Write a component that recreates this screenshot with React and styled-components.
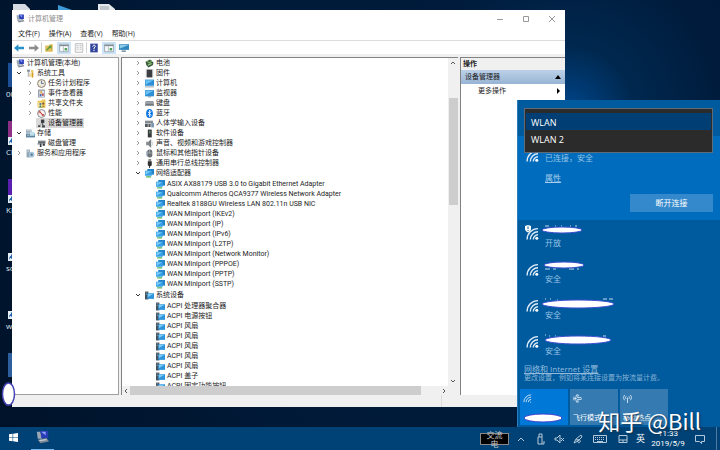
import React from "react";
import styled, { createGlobalStyle } from "styled-components";

const systemTools = [
  { icon: "clock", label: "任务计划程序", closed: true },
  { icon: "event", label: "事件查看器", closed: true },
  { icon: "share", label: "共享文件夹", closed: true },
  { icon: "perf", label: "性能", closed: true },
  { icon: "device", label: "设备管理器", selected: true },
];

const deviceClasses = [
  { icon: "battery", label: "电池" },
  { icon: "firmware", label: "固件" },
  { icon: "computer", label: "计算机" },
  { icon: "monitor", label: "监视器" },
  { icon: "keyboard", label: "键盘" },
  { icon: "bluetooth", label: "蓝牙" },
  { icon: "hid", label: "人体学输入设备" },
  { icon: "software", label: "软件设备" },
  { icon: "sound", label: "声音、视频和游戏控制器" },
  { icon: "mouse", label: "鼠标和其他指针设备" },
  { icon: "usb", label: "通用串行总线控制器" },
];

const adapters = [
  "ASIX AX88179 USB 3.0 to Gigabit Ethernet Adapter",
  "Qualcomm Atheros QCA9377 Wireless Network Adapter",
  "Realtek 8188GU Wireless LAN 802.11n USB NIC",
  "WAN Miniport (IKEv2)",
  "WAN Miniport (IP)",
  "WAN Miniport (IPv6)",
  "WAN Miniport (L2TP)",
  "WAN Miniport (Network Monitor)",
  "WAN Miniport (PPPOE)",
  "WAN Miniport (PPTP)",
  "WAN Miniport (SSTP)",
];

const systemDevices = [
  "ACPI 处理器聚合器",
  "ACPI 电源按钮",
  "ACPI 风扇",
  "ACPI 风扇",
  "ACPI 风扇",
  "ACPI 风扇",
  "ACPI 风扇",
  "ACPI 盖子",
  "ACPI 固定功能按钮",
];

const shortcuts = [
  { label: "", color: "transparent" },
  { label: "00", color: "#1c4f96" },
  { label: "Ch", color: "#8e2f86", arrow: true },
  { label: "KN", color: "#5a1fae", arrow: true },
  { label: "so", color: "transparent", arrow: true },
  { label: "we", color: "transparent", arrow: true },
  { label: "", color: "#2c5f9c" },
];

// rx, ry and cy of the mark over every network name, with the letter tips round it
const networks = [
  { secure: "开放", open: true, cx: 21, cy: 6, rx: 20, ry: 3, tips: "M4 2h4M14 2h1M20 2h1M29 2h1M34 2h2" },
  { secure: "安全", cx: 23, cy: 5, rx: 20, ry: 3, tips: "M4 9h5M12 9h3M28 9h5M36 9h2" },
  { secure: "安全", cx: 37, cy: 8, rx: 36, ry: 4, tips: "M4 3h1M9 3h1M16 4h1M62 3h4M68 3h4" },
  { secure: "安全", cx: 37, cy: 8, rx: 33, ry: 4, tips: "M4 3h1M8 4h1M14 4h1M62 4h3" },
];

const Glyph = ({ kind }) => {
  switch (kind) {
    case "app":
      return (
        <g>
          <path d="M1 2h4l2 8H2z" fill="#9aa7b4" />
          <path d="M5 1h9v8H6z" fill="#2a3db4" />
          <path d="M6 2l5 4V2z" fill="#8fa4ff" />
          <path d="M2 11l10-2 3 4-10 2z" fill="#7c8896" />
          <path d="M4 12l8-1" stroke="#e3e8ee" />
        </g>
      );
    case "tools":
      return (
        <g>
          <path d="M3 2h3v12H3z" fill="#b9bec4" />
          <path d="M2 1h5v4H2z" fill="#8b949d" />
          <path d="M9 2h4v4H9z" fill="#e9c65a" />
          <path d="M10 6h3v9h-3z" fill="#d49a22" />
          <path d="M6 8h4v6H6z" fill="#f1d98b" />
        </g>
      );
    case "clock":
      return (
        <g>
          <circle cx="8" cy="8" r="7" fill="#efe9da" stroke="#77705f" strokeWidth="1.5" />
          <path d="M8 3v5h4" fill="none" stroke="#3c5e93" strokeWidth="1.4" />
        </g>
      );
    case "event":
      return (
        <g>
          <path d="M2 1h12v14H2z" fill="#8b8f99" />
          <path d="M4 3h9v11H4z" fill="#dfe6f2" />
          <path d="M6 4h3v4H6z" fill="#e0a02c" />
          <path d="M9 8h3v4H9z" fill="#b34343" />
          <path d="M5 9h3v4H5z" fill="#4767ae" />
        </g>
      );
    case "share":
      return (
        <g>
          <path d="M1 3h7l1-2h6v14H1z" fill="#e9c556" />
          <path d="M2 6h8v8H2z" fill="#f5df90" />
          <circle cx="6" cy="9" r="2" fill="#4e7ca4" />
          <path d="M3 15l3-4 3 4z" fill="#3c8b66" />
          <circle cx="11" cy="8" r="2" fill="#7c5b3c" />
          <path d="M8 15l3-5 3 5z" fill="#c09534" />
        </g>
      );
    case "perf":
      return (
        <g>
          <circle cx="8" cy="8" r="7" fill="#f6f1f1" stroke="#75797d" strokeWidth="1.5" />
          <path d="M3 8l2-4 5 8 2-3M4 4l8 8" fill="none" stroke="#c93434" strokeWidth="1.5" />
        </g>
      );
    case "device":
      return (
        <g>
          <path d="M7 1h6v6H7z" fill="#353b42" />
          <path d="M9 7h2v4H9z" fill="#555" />
          <path d="M2 11h4v3H2zM9 11h5v4H9z" fill="#3d4248" />
          <path d="M5 9h6" stroke="#777" />
        </g>
      );
    case "storage":
      return (
        <g>
          <path d="M0 1h10v6H0z" fill="#9fb1bf" />
          <path d="M2 3h7" stroke="#eef3f6" />
          <path d="M0 8h16v7H0z" fill="#5f87a0" />
          <path d="M7 5h8v7H7z" fill="#bfe0ec" />
          <path d="M2 11h4" stroke="#fff" />
        </g>
      );
    case "disk":
      return (
        <g>
          <path d="M2 3h13v5H2z" fill="#5d666c" />
          <path d="M3 4h11" stroke="#b4bdc3" />
          <path d="M5 8h3v6H5zM10 8h4v4h-4z" fill="#343b40" />
          <path d="M1 7h4v3H1z" fill="#868f95" />
        </g>
      );
    case "services":
      return (
        <g>
          <path d="M1 1h6v14H1z" fill="#8ea5b4" />
          <path d="M2 3h4M2 5h4" stroke="#e9f0f5" />
          <circle cx="10" cy="10" r="5" fill="#a8c4d8" />
          <circle cx="10" cy="10" r="2" fill="#4f7896" />
        </g>
      );
    case "battery":
      return (
        <g>
          <path d="M1 5l8-4 6 5-1 5-8 4-4-5z" fill="#3b5a44" />
          <path d="M3 4l5 3 4-4" fill="none" stroke="#79b15c" strokeWidth="2" />
          <path d="M5 11l7-3" stroke="#9fd08b" strokeWidth="2" />
        </g>
      );
    case "firmware":
      return (
        <g>
          <path d="M3 1h10v14H3z" fill="#3c3d40" />
          <path d="M2 1v14M14 1v14" stroke="#77797d" strokeDasharray="1 1" />
        </g>
      );
    case "computer":
      return (
        <g>
          <path d="M0 1h16v11H0z" fill="#2d8fd6" />
          <path d="M1 2h14L1 10z" fill="#6bc0f2" />
          <path d="M0 14h16" stroke="#8e9aa3" strokeWidth="1.6" />
        </g>
      );
    case "monitor":
      return (
        <g>
          <path d="M0 2h16v11H0z" fill="#2d8fd6" />
          <path d="M1 3h14L1 11z" fill="#6bc0f2" />
          <path d="M5 14h6" stroke="#77838c" strokeWidth="1.4" />
        </g>
      );
    case "keyboard":
      return (
        <g>
          <path d="M1 4h14l1 8H0z" fill="#6f767c" />
          <path d="M1 7h14" stroke="#b7bdc2" strokeWidth="2" />
        </g>
      );
    case "bluetooth":
      return (
        <g>
          <ellipse cx="8" cy="8" rx="6" ry="8" fill="#0a74e0" />
          <path d="M5 5l6 6-3 3V2l3 3-6 6" fill="none" stroke="#fff" strokeWidth="1.4" />
        </g>
      );
    case "hid":
      return (
        <g>
          <path d="M0 3h14v5H0z" fill="#7b8288" />
          <path d="M1 5h11" stroke="#c8cdd1" strokeDasharray="1 1" />
          <path d="M0 9h5v5H0zM6 9h4v5H6z" fill="#50575d" />
          <path d="M11 7h5v8h-5z" fill="#7d99af" />
        </g>
      );
    case "software":
      return (
        <g>
          <path d="M5 1h7v14H5z" fill="#36393c" />
          <path d="M7 3h3v5H7z" fill="#5d7a63" />
        </g>
      );
    case "sound":
      return (
        <g>
          <path d="M2 5h4l5-5v16l-5-5H2z" fill="#878c91" />
          <path d="M9 3v10" stroke="#4d5257" />
          <path d="M12 4c2 2 2 6 0 8" fill="none" stroke="#a7adb2" />
        </g>
      );
    case "mouse":
      return (
        <g>
          <rect x="4" y="1" width="9" height="14" rx="4" fill="#6c7177" />
          <path d="M8 1v6M4 7h9" stroke="#c0c5ca" />
          <path d="M4 3c-2 3-2 7 0 10" fill="none" stroke="#5079ad" />
        </g>
      );
    case "usb":
      return (
        <g>
          <path d="M6 0h5v4H6z" fill="#8a8a8a" />
          <path d="M5 4h7v7l-2 2H7l-2-2z" fill="#2e2e2e" />
          <path d="M8 12v4" stroke="#2e2e2e" strokeWidth="1.6" />
        </g>
      );
    case "network":
      return (
        <g>
          <path d="M4 0h12v10H4z" fill="#2583c8" />
          <path d="M0 3h12v9H0z" fill="#36a0e6" />
          <path d="M1 4h10l-10 6z" fill="#7ccaf5" />
          <path d="M2 14h9" stroke="#39a845" strokeWidth="2" />
        </g>
      );
    case "chip":
      return (
        <g>
          <path d="M0 1h6v14H0z" fill="#43525c" />
          <path d="M1 3h3M1 6h3" stroke="#9bb1bd" />
          <path d="M4 4h12v10H4z" fill="#2d93da" />
          <path d="M5 5h10l-10 6z" fill="#7ccaf5" />
        </g>
      );
    case "back":
      return <path d="M0 8l7-6v4h9v4H7v4z" fill="#2a90cc" />;
    case "forward":
      return <path d="M16 8l-7-6v4H0v4h9v4z" fill="#8a8c8e" />;
    case "folderUp":
      return (
        <g>
          <path d="M2 4h6l1-2h5v12H2z" fill="#e0bd59" />
          <path d="M3 11l6-6-3 0 6-1v6l-2-3-5 5z" fill="#4e9a3d" />
        </g>
      );
    case "panes":
      return (
        <g>
          <path d="M1 2h14v12H1z" fill="#f7fafc" stroke="#7e8990" />
          <path d="M1 4h14" stroke="#7e8990" strokeWidth="2" />
          <path d="M7 5v9" stroke="#9ba5ab" />
          <path d="M9 8h4v4H9z" fill="#4fa45a" />
        </g>
      );
    case "props":
      return (
        <g>
          <path d="M2 1h12v14H2z" fill="#f5f5f5" stroke="#a0a4a8" />
          <path d="M4 4h3M4 7h3M4 10h3M9 4h3M9 7h3M9 10h3" stroke="#a8afb5" />
        </g>
      );
    case "help":
      return (
        <g>
          <path d="M2 1h12v14H2z" fill="#31459b" />
          <path d="M6 6c0-4 5-3 4 0l-2 2v2M8 11v2" fill="none" stroke="#fff" strokeWidth="1.6" />
        </g>
      );
    case "scan":
      return (
        <g>
          <path d="M0 2h16v9H0z" fill="#2f86bd" />
          <path d="M1 3h14L1 9z" fill="#8acbe8" />
          <path d="M4 13h7" stroke="#5b7a8c" strokeWidth="2" />
        </g>
      );
    default:
      return null;
  }
};

const Icon = ({ kind }) => (
  <IconSvg viewBox="0 0 16 16" aria-hidden="true">
    <Glyph kind={kind} />
  </IconSvg>
);

const Chevron = ({ open }) => (
  <ChevronSvg viewBox="0 0 6 6" aria-hidden="true">
    <path
      d={open ? "M1 2l2 2 2-2" : "M2 1l2 2-2 2"}
      fill="none"
      stroke={open ? "#333" : "#999"}
    />
  </ChevronSvg>
);

const TreeRow = ({ icon, label, level = 0, open, closed, selected }) => (
  <Row $level={level}>
    <Toggle>{(open || closed) && <Chevron open={open} />}</Toggle>
    <RowLabel $selected={selected}>
      <Icon kind={icon} />
      {label}
    </RowLabel>
  </Row>
);

const WifiIcon = ({ shield }) => (
  <WifiSvg viewBox="0 0 14 16" aria-hidden="true">
    <g fill="none" stroke="#dcebf7" strokeWidth="1.4">
      <path d="M2.100 14.500A10.900 10.900 0 0 1 13 3.600" />
      <path d="M5.300 14.500A7.700 7.700 0 0 1 13 6.800" />
      <path d="M8.300 14.500A4.700 4.700 0 0 1 13 9.800" />
    </g>
    <circle cx="11.800" cy="13.300" r="1.500" fill="#fff" />
    {shield && (
      <g>
        <path d="M0 1l3-1 3 1v3c0 2-2 3-3 3.500C2 7 0 6 0 4z" fill="#fff" />
        <path d="M3 1.500v2.500M3 5v1" stroke="#005a9e" />
      </g>
    )}
  </WifiSvg>
);

const App = () => {
  return (
    <Desktop>
      <GlobalStyle />
      <Wallpaper>
        {/* Desktop shortcuts */}
        <TopIcons viewBox="0 0 130 14" aria-hidden="true">
          <path d="M13 4h12l5 5v5H13z" fill="#d5dbe0" />
          <path d="M58 5l14 5v3H58z" fill="#3b9bd6" />
          <path d="M98 4h11l6 5v5H98z" fill="#e5e8ea" />
          <path d="M100 7h9M100 9h9" stroke="#9ba5ad" />
        </TopIcons>
        <Shortcuts>
          {shortcuts.map((s, i) => (
            <Shortcut key={i}>
              <ShortcutIcon $color={s.color}>
                {s.arrow && (
                  <ArrowSvg viewBox="0 0 8 8" aria-hidden="true">
                    <path d="M0 0h8v8H0z" fill="#e6eef6" />
                    <path d="M1 7c0-3 1-4 2-4V1l3 3-3 2V5C2 5 2 5 1 7z" fill="#1f5ea8" />
                  </ArrowSvg>
                )}
              </ShortcutIcon>
              <ShortcutLabel>{s.label}</ShortcutLabel>
            </Shortcut>
          ))}
        </Shortcuts>

        {/* Computer management window */}
        <Window>
          <TitleBar>
            <Icon kind="app" />
            <Title>计算机管理</Title>
            <CaptionButton aria-label="最小化">
              <CaptionSvg viewBox="0 0 6 6"><path d="M0 3.500h6" /></CaptionSvg>
            </CaptionButton>
            <CaptionButton aria-label="最大化">
              <CaptionSvg viewBox="0 0 6 6"><path d="M.5.5h5v5h-5z" /></CaptionSvg>
            </CaptionButton>
            <CaptionButton aria-label="关闭">
              <CaptionSvg viewBox="0 0 6 6"><path d="M0 0l6 6M6 0L0 6" /></CaptionSvg>
            </CaptionButton>
          </TitleBar>
          <MenuBar>
            <MenuButton>文件(F)</MenuButton>
            <MenuButton>操作(A)</MenuButton>
            <MenuButton>查看(V)</MenuButton>
            <MenuButton>帮助(H)</MenuButton>
          </MenuBar>
          <ToolBar>
            <ToolButton aria-label="后退"><Icon kind="back" /></ToolButton>
            <ToolButton aria-label="前进"><Icon kind="forward" /></ToolButton>
            <Divider />
            <ToolButton aria-label="上一级"><Icon kind="folderUp" /></ToolButton>
            <ToolButton aria-label="控制台树" $active><Icon kind="panes" /></ToolButton>
            <ToolButton aria-label="属性"><Icon kind="props" /></ToolButton>
            <Divider />
            <ToolButton aria-label="帮助"><Icon kind="help" /></ToolButton>
            <ToolButton aria-label="操作窗格" $active><Icon kind="panes" /></ToolButton>
            <ToolButton aria-label="扫描"><Icon kind="scan" /></ToolButton>
          </ToolBar>

          <Panes>
            <ConsoleTree>
              <RootRow>
                <Icon kind="app" />
                计算机管理(本地)
              </RootRow>
              <TreeRow icon="tools" label="系统工具" open />
              {systemTools.map((t) => (
                <TreeRow key={t.label} level={1} {...t} />
              ))}
              <TreeRow icon="storage" label="存储" open />
              <TreeRow icon="disk" label="磁盘管理" level={1} />
              <TreeRow icon="services" label="服务和应用程序" closed />
            </ConsoleTree>

            <DevicePane>
              <DeviceTree>
                {deviceClasses.map((d) => (
                  <TreeRow key={d.label} closed {...d} />
                ))}
                <TreeRow icon="network" label="网络适配器" open />
                <Branch>
                  {adapters.map((name) => (
                    <TreeRow key={name} icon="network" label={name} level={1} />
                  ))}
                </Branch>
                <TreeRow icon="chip" label="系统设备" open />
                <Branch>
                  {systemDevices.map((name, i) => (
                    <TreeRow key={i} icon="chip" label={name} level={1} />
                  ))}
                </Branch>
              </DeviceTree>
              <VerticalBar>
                <ScrollSvg viewBox="0 0 8 8"><path d="M2 5l2-2 2 2" /></ScrollSvg>
                <VerticalTrack><VerticalThumb /></VerticalTrack>
                <ScrollSvg viewBox="0 0 8 8"><path d="M2 3l2 2 2-2" /></ScrollSvg>
              </VerticalBar>
              <HorizontalBar>
                <ScrollSvg viewBox="0 0 8 8"><path d="M5 2L3 4l2 2" /></ScrollSvg>
                <HorizontalTrack><HorizontalThumb /></HorizontalTrack>
                <ScrollSvg viewBox="0 0 8 8"><path d="M3 2l2 2-2 2" /></ScrollSvg>
              </HorizontalBar>
            </DevicePane>

            <ActionPane>
              <ActionHeading>操作</ActionHeading>
              <ActionGroup>
                设备管理器
                <MarkSvg viewBox="0 0 6 6"><path d="M0 5l3-4 3 4z" /></MarkSvg>
              </ActionGroup>
              <ActionItem>
                更多操作
                <MarkSvg viewBox="0 0 6 6"><path d="M2 0l3 3-3 3z" /></MarkSvg>
              </ActionItem>
            </ActionPane>
          </Panes>
          <StatusBar>
            <StatusPart />
          </StatusBar>
        </Window>
        <Smudge viewBox="0 0 14 24" aria-hidden="true">
          <ellipse cx="7" cy="12" rx="6" ry="11" fill="#fff" stroke="#4444b8" strokeWidth="1.500" />
        </Smudge>
      </Wallpaper>

      {/* Network flyout */}
      <Flyout>
        <FlyoutTop>
          <AdapterSelect size={2} defaultValue="WLAN" aria-label="WLAN">
            <option value="WLAN">WLAN</option>
            <option value="WLAN 2">WLAN 2</option>
          </AdapterSelect>
        </FlyoutTop>
        <Connected>
          <ConnectedInfo>
            <WifiIcon />
            <NetworkText>
              <Status>已连接，安全</Status>
              <PropertiesLink href="#properties">属性</PropertiesLink>
            </NetworkText>
          </ConnectedInfo>
          <DisconnectButton>断开连接</DisconnectButton>
        </Connected>
        <NetworkList>
          {networks.map((n, i) => (
            <Network key={i}>
              <WifiIcon shield={n.open} />
              <NetworkText>
                <NameMark viewBox="0 0 80 13" aria-hidden="true">
                  <path d={n.tips} stroke="#c4dcef" />
                  <ellipse cx={n.cx} cy={n.cy} rx={n.rx} ry={n.ry} fill="#fff" stroke="#3f4fcf" />
                </NameMark>
                <Status>{n.secure}</Status>
              </NetworkText>
            </Network>
          ))}
        </NetworkList>
        <SettingsLink href="#settings">网络和 Internet 设置</SettingsLink>
        <Hint>更改设置，例如将某连接设置为按流量计费。</Hint>
        <Tiles>
          <Tile $on aria-label="WLAN">
            <TileSvg viewBox="0 0 10 10">
              <path d="M1 9a8 8 0 0 1 8-8M3.500 9A5.500 5.500 0 0 1 9 3.500M6 9a3 3 0 0 1 3-3M8 9h1" />
            </TileSvg>
            <TileMark viewBox="0 0 40 10">
              <ellipse cx="20" cy="5" rx="19" ry="4" fill="#fff" stroke="#3f3fcf" />
            </TileMark>
          </Tile>
          <Tile>
            <TileSvg viewBox="0 0 10 10">
              <path d="M1 3v4M1 5h3M4 1h2l-1 3h4l1 1-1 1H5l1 3H4L3 6V4z" />
            </TileSvg>
            飞行模式
          </Tile>
          <Tile>
            <TileSvg viewBox="0 0 10 10">
              <path d="M2 1a4 4 0 0 0 0 6M8 1a4 4 0 0 1 0 6M3.500 2.500a2 2 0 0 0 0 3M6.500 2.500a2 2 0 0 1 0 3M5 4v6" />
            </TileSvg>
            移动热点
          </Tile>
        </Tiles>
      </Flyout>

      <TaskBar>
        <StartButton aria-label="开始">
          <StartSvg viewBox="0 0 10 10">
            <path d="M0 1.500l4-.6v3.800H0zM4.600.8L10 0v4.700H4.600zM0 5.300h4v3.800l-4-.6zM4.600 5.300H10V10l-5.400-.8z" />
          </StartSvg>
        </StartButton>
        <RunningApp aria-label="计算机管理">
          <Icon kind="app" />
        </RunningApp>
        <Tray>
          <PowerBox>交流电</PowerBox>
          <TrayButton aria-label="显示隐藏的图标">
            <TraySvg viewBox="0 0 12 12"><path d="M3 8l3-3 3 3" /></TraySvg>
          </TrayButton>
          <TrayButton aria-label="USB">
            <TraySvg viewBox="0 0 12 12"><path d="M4 4h4v7H4zM5 4V1h3v3M8 11h2V8" /></TraySvg>
          </TrayButton>
          <TrayButton aria-label="音量">
            <TraySvg viewBox="0 0 12 12"><path d="M2 5h2l3-3v8L4 7H2zM8 5l3 3M11 5L8 8" /></TraySvg>
          </TrayButton>
          <TrayButton aria-label="Ink">
            <TraySvg viewBox="0 0 12 12"><path d="M2 10l2-4 5-4 1 2-4 4zM4 7c3-1 5 0 4 2s-3 0-2-2" /></TraySvg>
          </TrayButton>
          <TrayButton aria-label="触摸键盘" $wide>
            <KeyboardSvg viewBox="0 0 14 12">
              <path d="M.5 2.500h13v7H.5z" />
              <path d="M2 4.500h10M2 6.500h10" strokeDasharray="1 1" />
              <path d="M4 8.500h6" />
            </KeyboardSvg>
          </TrayButton>
          <TrayButton aria-label="触摸板">
            <TraySvg viewBox="0 0 12 12"><path d="M2 2.500h8v7H2zM2 7h8M6 7v2" /></TraySvg>
          </TrayButton>
          <Language>英</Language>
          <Clock>
            <span>11:33</span>
            <span>2019/5/9</span>
          </Clock>
          <TrayButton aria-label="通知" $wide>
            <TraySvg viewBox="0 0 12 12"><path d="M1.500 2.500h9v6h-3v2l-2-2h-4z" /></TraySvg>
          </TrayButton>
          <ShowDesktop aria-label="显示桌面" />
        </Tray>
      </TaskBar>
      <Watermark>知乎 @Bill</Watermark>
    </Desktop>
  );
};

export default App;

// Styles
const GlobalStyle = createGlobalStyle`
  * {
    box-sizing: border-box;
  }

  body {
    margin: 0;
    overflow: hidden;
    font-family: "Open Sans", "Noto Sans CJK SC", sans-serif;
    font-size: 7px;
    line-height: 10px;
  }

  button, select {
    font: inherit;
    color: inherit;
    border: none;
    border-radius: 0;
    padding: 0;
    background: none;
  }

  ul {
    list-style: none;
    margin: 0;
    padding: 0;
  }
`;

const Desktop = styled.div`
  position: relative;
  display: flex;
  flex-direction: column;
  height: 100vh;
`;

const Wallpaper = styled.main`
  position: relative;
  flex: 1;
  min-height: 0;
  overflow: hidden;
  background: radial-gradient(circle at 79% 26%, #00458a 0, #00284f 10%, #001b3b 24%, #001a38 60%, #001229 100%);
`;

const TopIcons = styled.svg`
  position: absolute;
  top: 0;
  left: 0;
  width: 130px;
  height: 14px;
`;

const Shortcuts = styled.div`
  display: flex;
  flex-direction: column;
  margin-top: -17px;
`;

const Shortcut = styled.div`
  display: flex;
  flex-direction: column;
  justify-content: flex-end;
  height: 58px;
  padding-left: 6px;
`;

const ShortcutIcon = styled.div`
  display: flex;
  align-items: flex-end;
  width: 20px;
  height: 24px;
  margin-left: 2px;
  background: ${(p) => p.$color};
`;

const ArrowSvg = styled.svg`
  width: 8px;
  height: 8px;
`;

const ShortcutLabel = styled.span`
  height: 12px;
  padding-top: 2px;
  font-size: 8px;
  color: #dbe4ee;
`;

const Window = styled.section`
  position: absolute;
  inset: 10px 155px 20px 12px;
  display: flex;
  flex-direction: column;
  background: #f0f0f0;
  color: #1c1c1c;
`;

const IconSvg = styled.svg`
  width: 9px;
  height: 9px;
  flex: none;
`;

const TitleBar = styled.header`
  display: flex;
  align-items: center;
  height: 17px;
  padding-left: 4px;
  background: #fff;
`;

const Title = styled.h1`
  flex: 1;
  margin: 0 0 0 3px;
  font-size: 7px;
  font-weight: normal;
  color: #8c8c8c;
`;

const CaptionButton = styled.button`
  display: flex;
  align-items: center;
  justify-content: center;
  width: 26px;
  height: 17px;
`;

const CaptionSvg = styled.svg`
  width: 6px;
  height: 6px;
  fill: none;
  stroke: #999;
`;

const MenuBar = styled.nav`
  display: flex;
  align-items: center;
  gap: 9px;
  height: 13px;
  padding-left: 6px;
  background: #fff;
`;

const MenuButton = styled.button``;

const ToolBar = styled.div`
  display: flex;
  align-items: center;
  height: 14px;
  background: #fff;
  border-top: 1px solid #dcdcdc;
`;

const ToolButton = styled.button`
  display: flex;
  align-items: center;
  justify-content: center;
  width: 14px;
  height: 12px;
  background: ${(p) => (p.$active ? "#cce4f7" : "none")};

  & + & {
    margin-left: 1px;
  }

  ${IconSvg} {
    width: 10px;
    height: 10px;
  }
`;

const Divider = styled.span`
  width: 1px;
  height: 11px;
  background: #d0d0d0;
`;

const Panes = styled.div`
  display: grid;
  grid-template-columns: 107px 1fr 105px;
  gap: 2px;
  flex: 1;
  min-height: 0;
  padding-top: 3px;
`;

const ConsoleTree = styled.ul`
  padding-left: 4px;
  background: #fff;
  border: 1px solid #a0a0a0;
  border-left: none;
`;

const Row = styled.li`
  display: flex;
  align-items: center;
  height: 10px;
  padding-left: ${(p) => p.$level * 11}px;
  white-space: nowrap;
`;

const RootRow = styled.li`
  display: flex;
  align-items: center;
  gap: 2px;
  height: 10px;
  white-space: nowrap;
`;

const Toggle = styled.span`
  display: flex;
  width: 9px;
`;

const RowLabel = styled.span`
  display: flex;
  align-items: center;
  gap: 2px;
  padding: 0 1px;
  background: ${(p) => (p.$selected ? "#d9d9d9" : "none")};
`;

const ChevronSvg = styled.svg`
  width: 6px;
  height: 6px;
`;

const DevicePane = styled.div`
  display: grid;
  grid-template-columns: 1fr 10px;
  grid-template-rows: 1fr 9px;
  min-width: 0;
  min-height: 0;
  background: #f0f0f0;
  border-top: 1px solid #828282;
  border-left: 1px solid #828282;
`;

const DeviceTree = styled.ul`
  min-height: 0;
  padding-left: 13px;
  overflow: hidden;
  font-family: Roboto, "Noto Sans CJK SC", sans-serif;
  background: #fff;
`;

const Branch = styled.ul`
  padding: 1px 0;
`;

const VerticalBar = styled.div`
  display: flex;
  flex-direction: column;
  align-items: center;
  padding: 1px 0;
`;

const VerticalTrack = styled.div`
  flex: 1;
  width: 100%;
  padding-top: 31px;
`;

const VerticalThumb = styled.div`
  height: 107px;
  margin-left: 1px;
  background: #cdcdcd;
`;

const HorizontalBar = styled.div`
  display: flex;
  align-items: center;
`;

const HorizontalTrack = styled.div`
  flex: 1;
  height: 100%;
`;

const HorizontalThumb = styled.div`
  width: 94%;
  height: 100%;
  background: #cdcdcd;
`;

const ScrollSvg = styled.svg`
  width: 8px;
  height: 8px;
  flex: none;
  fill: none;
  stroke: #555;
`;

const ActionPane = styled.aside`
  background: #fff;
  border-top: 1px solid #828282;
  border-left: 1px solid #828282;
`;

const ActionHeading = styled.h2`
  height: 12px;
  margin: 0;
  padding: 1px 2px;
  font-size: 7px;
  font-weight: bold;
  background: #f0f0f0;
`;

const ActionGroup = styled.button`
  display: flex;
  align-items: center;
  justify-content: space-between;
  width: 100%;
  height: 14px;
  padding: 0 4px;
  background: linear-gradient(#bcd1e8, #98b4d4);
`;

const ActionItem = styled.button`
  display: flex;
  align-items: center;
  justify-content: space-between;
  width: 100%;
  height: 14px;
  padding: 0 4px 0 17px;
`;

const MarkSvg = styled.svg`
  width: 6px;
  height: 6px;
`;

const StatusBar = styled.footer`
  display: flex;
  justify-content: flex-end;
  height: 12px;
  padding-right: 123px;
`;

const StatusPart = styled.span`
  border-left: 1px solid #dcdcdc;
`;

const Smudge = styled.svg`
  position: absolute;
  left: 1px;
  bottom: 21px;
  width: 15px;
  height: 24px;
`;

const Flyout = styled.section`
  position: absolute;
  right: 0;
  bottom: 23px;
  width: 203px;
  color: #fff;
  background: #005a9e;
  border-left: 1px solid #2b7cbc;
`;

const FlyoutTop = styled.div`
  position: relative;
  height: 36px;
`;

const AdapterSelect = styled.select`
  position: absolute;
  top: 8px;
  left: 6px;
  z-index: 1;
  width: 189px;
  height: 45px;
  padding: 4px 1px;
  overflow: hidden;
  font-size: 9px;
  background: #2b2b2b;
  border: 1px solid #5d6c78;
  outline: none;

  option {
    height: 17px;
    min-height: 17px;
    padding: 3px 5px;
    color: #fff;
  }

  option:checked {
    color: #fff;
    background: linear-gradient(#003e73, #003e73);
  }
`;

const Connected = styled.div`
  display: flex;
  flex-direction: column;
  padding: 11px 7px 8px;
  background: #006cbe;
`;

const ConnectedInfo = styled.div`
  display: flex;
  gap: 6px;
`;

const NetworkText = styled.div`
  display: flex;
  flex-direction: column;
  align-items: flex-start;

  ${ConnectedInfo} & {
    gap: 8px;
    padding-top: 5px;
  }
`;

const Status = styled.span`
  font-size: 8px;
  line-height: 12px;
  color: #99c4e5;
`;

const PropertiesLink = styled.a`
  font-size: 8px;
  line-height: 12px;
  color: #a8cdea;
`;

const DisconnectButton = styled.button`
  align-self: flex-end;
  width: 83px;
  height: 18px;
  margin-top: 10px;
  font-size: 8px;
  background: #3389cb;
`;

const NetworkList = styled.ul``;

const Network = styled.li`
  display: flex;
  gap: 6px;
  height: 36px;
  padding: 4px 7px 0;
`;

const WifiSvg = styled.svg`
  width: 14px;
  height: 16px;
  flex: none;

  ${Network} & {
    margin-top: 1px;
  }
`;

const NameMark = styled.svg`
  width: 80px;
  height: 13px;
  margin-left: -4px;
`;

const SettingsLink = styled.a`
  display: block;
  padding-left: 6px;
  font-size: 8px;
  line-height: 9px;
  color: #91bbdc;
`;

const Hint = styled.p`
  margin: 0 0 6px;
  padding-left: 6px;
  color: #86b2d4;
`;

const Tiles = styled.div`
  display: grid;
  grid-template-columns: repeat(4, 48px);
  gap: 2px;
  padding: 0 2px 2px;
`;

const Tile = styled.button`
  display: flex;
  flex-direction: column;
  align-items: flex-start;
  justify-content: space-between;
  height: 36px;
  padding: 5px 3px 2px;
  background: ${(p) => (p.$on ? "#0078d7" : "#357ab1")};
`;

const TileSvg = styled.svg`
  width: 9px;
  height: 9px;
  fill: none;
  stroke: #d8e8f5;
`;

const TileMark = styled.svg`
  width: 40px;
  height: 10px;
`;

const TaskBar = styled.footer`
  display: flex;
  height: 23px;
  color: #fff;
  background: #004275;
`;

const StartButton = styled.button`
  width: 31px;
  padding: 0 4px 0 0;
`;

const StartSvg = styled.svg`
  width: 9px;
  height: 9px;
  fill: #fff;
`;

const RunningApp = styled.button`
  width: 23px;
  border-bottom: 1px solid #76b9ed;

  ${IconSvg} {
    width: 14px;
    height: 14px;
  }
`;

const Tray = styled.div`
  display: flex;
  align-items: center;
  margin-left: auto;
`;

const PowerBox = styled.span`
  display: flex;
  align-items: center;
  justify-content: center;
  width: 29px;
  height: 12px;
  padding: 0 5px;
  margin-right: 2px;
  font-size: 8px;
  line-height: 9px;
  text-align: center;
  color: #c8c8c8;
  background: #000;
  border: 1px solid #8a8a8a;
`;

const TrayButton = styled.button`
  display: flex;
  align-items: center;
  justify-content: center;
  width: ${(p) => (p.$wide ? 26 : 19)}px;
`;

const TraySvg = styled.svg`
  width: 12px;
  height: 12px;
  fill: none;
  stroke: #b5c9da;
`;

const KeyboardSvg = styled(TraySvg)`
  width: 14px;
`;

const Language = styled.span`
  width: 17px;
  font-size: 9px;
  text-align: center;
`;

const Clock = styled.time`
  display: flex;
  flex-direction: column;
  align-items: center;
  width: 38px;
  font-family: Roboto, sans-serif;
  font-size: 8px;
  line-height: 10px;
`;

const ShowDesktop = styled.button`
  width: 4px;
  height: 23px;
  margin-left: 3px;
  border-left: 1px solid #4d7a9e;
`;

const Watermark = styled.div`
  position: absolute;
  right: 19px;
  bottom: 20px;
  font-family: "Noto Sans CJK SC", sans-serif;
  font-size: 22px;
  line-height: 20px;
  color: #fff;
  text-shadow: 1px 1px 2px #12324f;
`;
